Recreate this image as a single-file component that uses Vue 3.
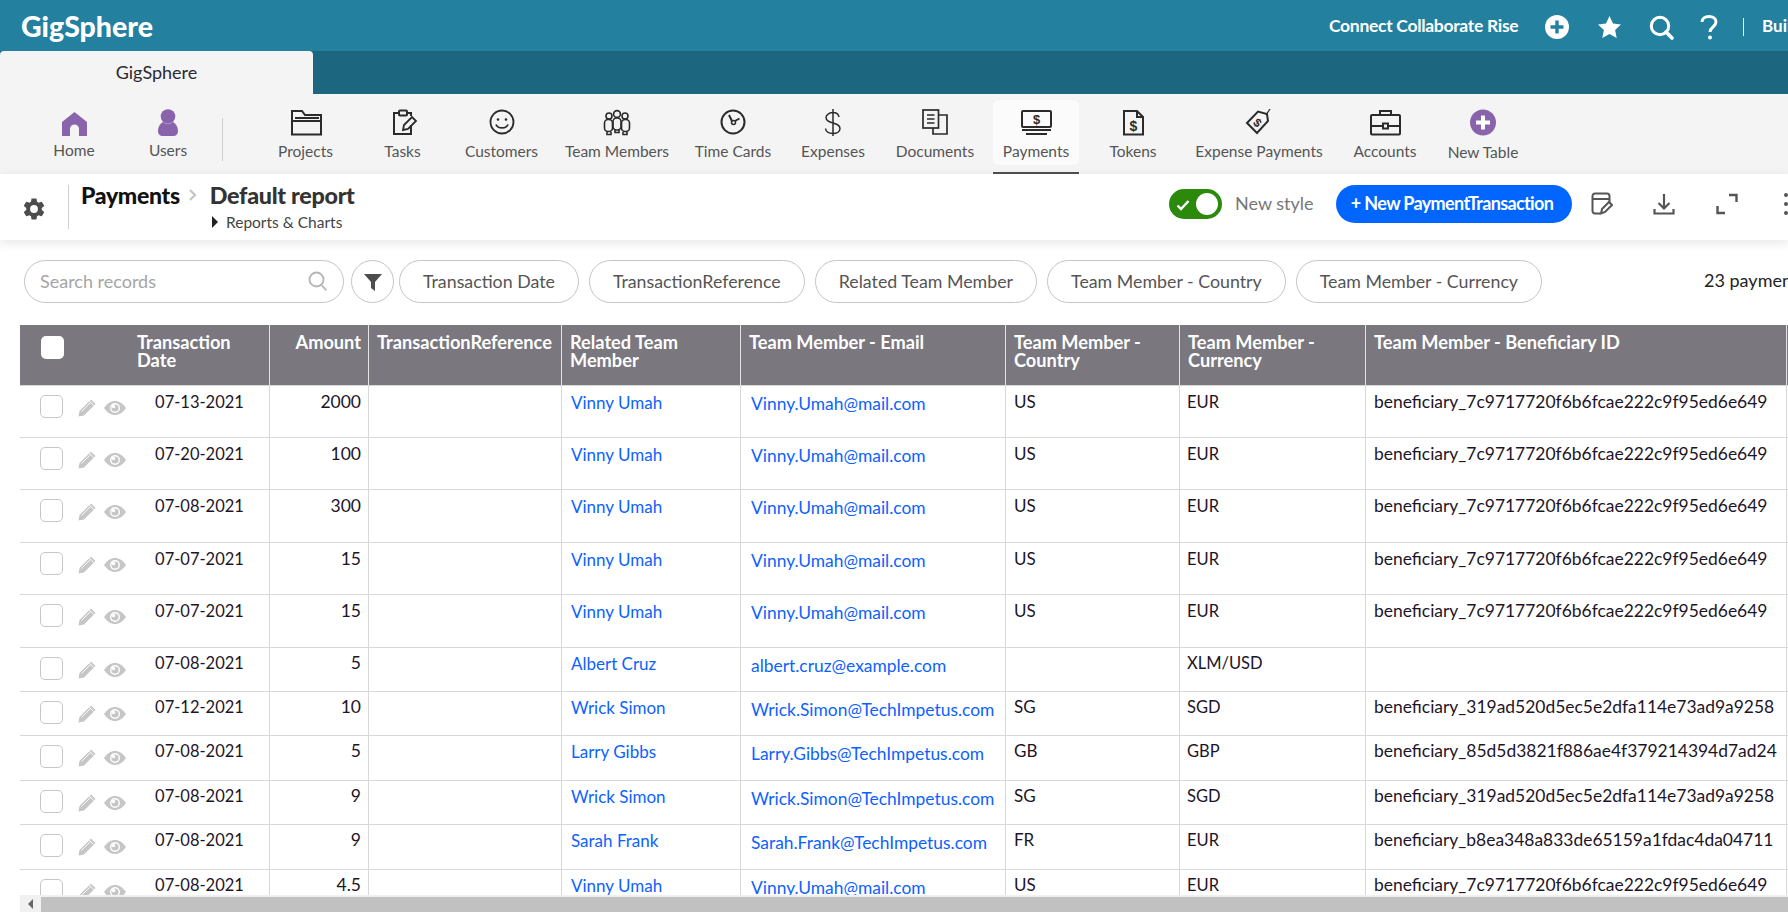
<script setup>
const navA = [
  { label: 'Home', w: 94, icon: 'home' },
  { label: 'Users', w: 94, icon: 'users' }
]
const navB = [
  { label: 'Projects', w: 97, icon: 'projects' },
  { label: 'Tasks', w: 97, icon: 'tasks' },
  { label: 'Customers', w: 101, icon: 'customers' },
  { label: 'Team Members', w: 130, icon: 'team' },
  { label: 'Time Cards', w: 102, icon: 'time' },
  { label: 'Expenses', w: 98, icon: 'dollar' },
  { label: 'Documents', w: 106, icon: 'docs' },
  { label: 'Payments', w: 86, icon: 'payments', active: true },
  { label: 'Tokens', w: 108, icon: 'tokens' },
  { label: 'Expense Payments', w: 144, icon: 'tag' },
  { label: 'Accounts', w: 108, icon: 'accounts' },
  { label: 'New Table', w: 88, icon: 'plus', low: true }
]
const pills = ['Transaction Date', 'TransactionReference', 'Related Team Member', 'Team Member - Country', 'Team Member - Currency']
const cols = [109, 141, 99, 193, 179, 265, 174, 186, 421, 120]
const vinny = ['Vinny Umah', 'Vinny.Umah@mail.com', 'US', 'EUR', 'beneficiary_7c9717720f6b6fcae222c9f95ed6e649']
const wrick = ['Wrick Simon', 'Wrick.Simon@TechImpetus.com', 'SG', 'SGD', 'beneficiary_319ad520d5ec5e2dfa114e73ad9a9258']
const mk = (date, amount, p, h) => ({ date, amount, name: p[0], email: p[1], country: p[2], currency: p[3], ben: p[4], h })
const rows = [
  mk('07-13-2021', '2000', vinny, 53),
  mk('07-20-2021', '100', vinny, 52),
  mk('07-08-2021', '300', vinny, 53),
  mk('07-07-2021', '15', vinny, 52),
  mk('07-07-2021', '15', vinny, 53),
  mk('07-08-2021', '5', ['Albert Cruz', 'albert.cruz@example.com', '', 'XLM/USD', ''], 44),
  mk('07-12-2021', '10', wrick, 44),
  mk('07-08-2021', '5', ['Larry Gibbs', 'Larry.Gibbs@TechImpetus.com', 'GB', 'GBP', 'beneficiary_85d5d3821f886ae4f379214394d7ad24'], 45),
  mk('07-08-2021', '9', wrick, 44),
  mk('07-08-2021', '9', ['Sarah Frank', 'Sarah.Frank@TechImpetus.com', 'FR', 'EUR', 'beneficiary_b8ea348a833de65159a1fdac4da04711'], 45),
  mk('07-08-2021', '4.5', vinny, 44)
]
</script>

<template>
  <div class="page">
    <header class="topbar">
      <div class="logo">GigSphere</div>
      <div class="tagline">Connect Collaborate Rise</div>
      <svg class="ti t-plus" width="24" height="24" viewBox="0 0 24 24"><circle cx="12" cy="12" r="12" fill="#fff"/><path d="M12 5.500v13M5.500 12h13" stroke="#23809f" stroke-width="3.400"/></svg>
      <svg class="ti t-star" width="25" height="24" viewBox="0 0 25 24"><path d="M12.500 1l3.500 7.400 8 1-5.900 5.500 1.600 8-7.200-4-7.200 4 1.600-8L1 9.400l8-1z" fill="#fff"/></svg>
      <svg class="ti t-search" width="25" height="25" viewBox="0 0 25 25" fill="none" stroke="#fff"><circle cx="11" cy="11" r="8.700" stroke-width="3"/><path d="M17 17l6 6" stroke-width="3.600" stroke-linecap="round"/></svg>
      <svg class="ti t-help" width="18" height="25" viewBox="0 0 18 25" fill="none" stroke="#fff"><path d="M2 7c0-3.500 3-5.500 7-5.500s7 2 7 5.500c0 5-6 5-6 10" stroke-width="3"/><circle cx="10" cy="22.500" r="2" fill="#fff" stroke="none"/></svg>
      <div class="tdiv"></div>
      <div class="build">Build</div>
    </header>

    <div class="tabbar"><div class="tab">GigSphere</div></div>

    <nav class="nav">
      <div v-for="n in navA" :key="n.label" class="nitem home-item" :style="{ width: n.w + 'px' }">
        <svg v-if="n.icon === 'home'" width="32" height="28" viewBox="0 0 32 28"><path d="M16.500 3L29 13v14h-8v-7a4.500 4.500 0 0 0-9 0v7H4V13z" fill="#8a63ad"/></svg>
        <svg v-else width="32" height="28" viewBox="0 0 32 28" fill="#8a63ad"><circle cx="16" cy="7.500" r="7.300"/><path d="M6 22c0-5 3-8 5-9 3 2.500 7 2.500 10 0 2 1 5 4 5 9 0 3-2 5-5 5H11c-3 0-5-2-5-5z"/></svg>
        <span>{{ n.label }}</span>
      </div>
      <div class="ndiv"></div>
      <div v-for="n in navB" :key="n.label" class="nitem" :class="{ active: n.active, low: n.low }" :style="{ width: n.w + 'px' }">
        <svg width="32" height="28" viewBox="0 0 32 28" fill="none" stroke="#2b2b2b" stroke-width="2">
          <template v-if="n.icon === 'projects'"><path d="M2 25.500V2h10l3 4h16v19.500zM2 12h29M5 9h24"/></template>
          <template v-else-if="n.icon === 'tasks'"><path d="M12 4H7v21h17v-9M20 4h4v3"/><rect x="12" y="1.500" width="8" height="5" rx="1"/><path d="M16 21l1-5 8-8 4 4-8 8z" stroke-width="1.800"/></template>
          <template v-else-if="n.icon === 'customers'"><circle cx="16" cy="13" r="11.500" stroke-width="1.800"/><circle cx="12" cy="10.500" r="1.300" fill="#2b2b2b" stroke="none"/><circle cx="20" cy="10.500" r="1.300" fill="#2b2b2b" stroke="none"/><path d="M10 15.500c2 4.500 10 4.500 12 0" stroke-width="1.800"/></template>
          <template v-else-if="n.icon === 'team'" ><g stroke-width="1.600"><circle cx="8" cy="7" r="3"/><circle cx="16" cy="5" r="3.400"/><circle cx="24" cy="7" r="3"/><rect x="3.500" y="10.500" width="8" height="12" rx="3.500"/><rect x="12" y="9" width="8" height="12" rx="3.500"/><rect x="20.500" y="10.500" width="8" height="12" rx="3.500"/><path d="M6 23v2.500h4V23M14 21v2.500h4V21M22 23v2.500h4V23"/></g></template>
          <template v-else-if="n.icon === 'time'"><circle cx="16" cy="13" r="11.500"/><path d="M12 6l3.200 6.500M18 12l4.500-2.500"/><circle cx="16.500" cy="13.500" r="2" stroke-width="1.500"/></template>
          <template v-else-if="n.icon === 'dollar'"><path d="M22 8c-.5-3-3-4.500-6-4.500S9 5.500 9 8.500c0 3.500 3.500 4.500 7 5.500s7 2 7 5.500c0 3-3 5-7 5s-7-2-7.500-5M16 0v27" stroke-width="1.500"/></template>
          <template v-else-if="n.icon === 'docs'"><g stroke-width="1.700"><rect x="4" y="1" width="15.500" height="18"/><path d="M8 6h7.500M8 10h7.500M8 14h7.500" stroke-width="1.400"/><path d="M19.500 6H28v19H14v-6"/></g></template>
          <template v-else-if="n.icon === 'payments'"><rect x="2" y="2" width="29" height="16" rx="1"/><text x="16.500" y="14.500" text-anchor="middle" font-family="Liberation Sans" font-weight="700" font-size="13" fill="#2b2b2b" stroke="none">$</text><path d="M2 21h29M6 25h21" stroke-width="2"/></template>
          <template v-else-if="n.icon === 'tokens'"><path d="M7 2h13l6 6v17.500H7zM20 2v6h6"/><text x="16.500" y="22" text-anchor="middle" font-family="Liberation Sans" font-weight="700" font-size="14" fill="#2b2b2b" stroke="none">$</text></template>
          <template v-else-if="n.icon === 'tag'"><path d="M4 14L15 2.500l9 2.500 1 7-11 12z"/><path d="M23 6l4-6" stroke-width="1.300"/><text x="15" y="18" text-anchor="middle" transform="rotate(40 15 13)" font-family="Liberation Sans" font-weight="700" font-size="12" fill="#2b2b2b" stroke="none">$</text></template>
          <template v-else-if="n.icon === 'accounts'"><rect x="2" y="6" width="29" height="19.500" rx="1"/><path d="M11 6V2h11v4M2 17h12M19 17h12"/><rect x="14" y="14.500" width="5" height="5"/></template>
          <template v-else-if="n.icon === 'plus'"><circle cx="16" cy="13.500" r="13" fill="#8a63ad" stroke="none"/><path d="M16 6.500v14M9 13.500h14" stroke="#fff" stroke-width="4"/></template>
        </svg>
        <span>{{ n.label }}</span>
      </div>
    </nav>

    <section class="toolbar">
      <svg class="gear" width="26" height="26" viewBox="0 0 24 24"><path fill="#4d4d4d" d="M19.140 12.940c.04-.3.06-.61.06-.94 0-.32-.02-.64-.07-.94l2.030-1.580a.49.49 0 0 0 .12-.61l-1.920-3.320a.488.488 0 0 0-.59-.22l-2.390.96c-.5-.38-1.030-.7-1.620-.94L14.400 2.810c-.04-.24-.24-.41-.48-.41h-3.840c-.24 0-.43.17-.47.41L9.250 5.350c-.59.24-1.130.57-1.620.94l-2.390-.96a.488.488 0 0 0-.59.22L2.740 8.870c-.12.21-.08.47.12.61l2.030 1.580c-.05.3-.09.63-.09.94s.02.64.07.94l-2.030 1.580a.49.49 0 0 0-.12.61l1.920 3.320c.12.22.37.29.59.22l2.390-.96c.5.38 1.030.7 1.620.94l.36 2.540c.05.24.24.41.48.41h3.840c.24 0 .44-.17.47-.41l.36-2.540c.59-.24 1.130-.56 1.620-.94l2.390.96c.22.08.47 0 .59-.22l1.920-3.320c.12-.22.07-.47-.12-.61zM12 15.600a3.600 3.600 0 1 1 0-7.200 3.600 3.600 0 0 1 0 7.200z"/></svg>
      <div class="vline"></div>
      <div class="crumbs">
        <div class="crumb-top"><b class="c1">Payments</b><svg class="chev" width="10" height="12" viewBox="0 0 10 12" fill="none" stroke="#c4c4c4" stroke-width="2.200"><path d="M2 1l5 5-5 5"/></svg><b class="c2">Default report</b></div>
        <div class="reports"><i class="tri"></i>Reports &amp; Charts</div>
      </div>
      <div class="toggle"><svg width="14" height="12" viewBox="0 0 14 12" fill="none" stroke="#fff" stroke-width="2.400"><path d="M1.500 6.500l3.500 3.500 7.500-8"/></svg><i class="knob"></i></div>
      <div class="newstyle">New style</div>
      <button class="newbtn">+ New PaymentTransaction</button>
      <svg class="a1" width="22" height="24" viewBox="0 0 22 24" fill="none" stroke="#555" stroke-width="2"><path d="M9 21.500H4a2.500 2.500 0 0 1-2.500-2.500V4A2.500 2.500 0 0 1 4 1.500h12A2.500 2.500 0 0 1 18.500 4v6M1.500 7h17"/><path d="M10 21.500l1-4.500 7-7 3 3-7 7z"/></svg>
      <svg class="a2" width="22" height="24" viewBox="0 0 22 24" fill="none" stroke="#555" stroke-width="2.200"><path d="M11 2v14M5.500 11l5.500 5.500 5.500-5.500M1.500 17v4.500h19V17"/></svg>
      <svg class="a3" width="22" height="22" viewBox="0 0 22 22" fill="none" stroke="#555" stroke-width="2.400"><path d="M13 2h7.500v7M9 20H1.500v-7"/></svg>
      <div class="dots"><i></i><i></i><i></i></div>
    </section>

    <section class="filters">
      <div class="search"><span>Search records</span><svg width="22" height="22" viewBox="0 0 22 22" fill="none" stroke="#b5b5b5" stroke-width="1.800"><circle cx="9.500" cy="9.500" r="7"/><path d="M14.500 15l5 5.500"/></svg></div>
      <div class="funnel"><svg width="18" height="18" viewBox="0 0 18 18"><path d="M0 1h18l-7 8v9l-4-3V9z" fill="#4d4d4d"/></svg></div>
      <div v-for="p in pills" :key="p" class="pill">{{ p }}</div>
      <div class="count">23 payments</div>
    </section>

    <div class="tablewrap">
      <table class="grid">
        <colgroup><col v-for="(c, i) in cols" :key="i" :style="{ width: c + 'px' }" /></colgroup>
        <thead>
          <tr>
            <th class="nob"><i class="headbox"></i></th>
            <th>Transaction Date</th>
            <th class="r">Amount</th>
            <th>TransactionReference</th>
            <th>Related Team Member</th>
            <th>Team Member - Email</th>
            <th>Team Member - Country</th>
            <th>Team Member - Currency</th>
            <th>Team Member - Beneficiary ID</th>
            <th></th>
          </tr>
        </thead>
        <tbody>
          <tr v-for="(r, i) in rows" :key="i" :class="{ tall: r.h > 50 }" :style="{ height: r.h + 'px' }">
            <td class="nob acts">
              <div class="actrow">
                <i class="box"></i>
                <svg width="18" height="18" viewBox="0 0 18 18"><path d="M13 0.500L17.500 5 6 16.500 0.500 17.500 1.500 12z" fill="#c6c6c6"/><path d="M3.500 12.500L13 3M11 1.800l5 5" stroke="#fff" stroke-width="0.900"/></svg>
                <svg class="eye" width="22" height="14" viewBox="0 0 22 14"><path d="M0 7c3-4.500 7-7 11-7s8 2.500 11 7c-3 4.500-7 7-11 7S3 11.500 0 7z" fill="#c6c6c6"/><circle cx="11" cy="7" r="5" fill="#fff"/><circle cx="11" cy="7" r="3.600" fill="#c6c6c6"/><circle cx="9.500" cy="5.500" r="1.800" fill="#fff"/></svg>
              </div>
            </td>
            <td class="date">{{ r.date }}</td>
            <td class="r amt">{{ r.amount }}</td>
            <td></td>
            <td class="lnk"><a>{{ r.name }}</a></td>
            <td class="lnk mail"><a>{{ r.email }}</a></td>
            <td>{{ r.country }}</td>
            <td class="cur">{{ r.currency }}</td>
            <td class="ben">{{ r.ben }}</td>
            <td></td>
          </tr>
        </tbody>
      </table>
    </div>
    <div class="hscroll"><div class="arrow"><i></i></div><div class="thumb"></div></div>
  </div>
</template>

<style scoped>
.page { width: 1788px; height: 912px; overflow: hidden; display: flex; flex-direction: column; background: #fff; font-family: Lato, "Noto Sans", sans-serif; color: #1d1527; }
.topbar { height: 51px; flex: none; background: #23809f; display: flex; align-items: center; color: #fff; white-space: nowrap; overflow: hidden; }
.logo { margin-left: 21px; width: 1308px; font-size: 28.500px; font-weight: 900; flex: none; }
.tagline { width: 216px; font-size: 17.500px; font-weight: 700; letter-spacing: -0.300px; flex: none; }
.ti { flex: none; margin-top: 2px; }
.t-star { margin-left: 28px; }
.t-search { margin-left: 27px; margin-top: 3px; }
.t-help { margin-left: 26px; margin-top: 4px; }
.tdiv { width: 1px; height: 18px; background: #fff; margin-left: 25px; margin-top: 3px; flex: none; }
.build { margin-left: 18px; font-size: 17px; font-weight: 700; flex: none; }
.tabbar { height: 43px; flex: none; background: #1c6680; }
.tab { width: 313px; height: 43px; box-sizing: border-box; padding-bottom: 2px; background: #f4f4f4; border-radius: 4px 4px 0 0; display: flex; align-items: center; justify-content: center; font-size: 18px; color: #2a2a32; }
.nav { height: 80px; flex: none; background: #f4f4f4; display: flex; padding-left: 27px; }
.nitem { flex: none; height: 80px; padding-top: 15px; box-sizing: border-box; display: flex; flex-direction: column; align-items: center; font-size: 15.500px; color: #555; position: relative; }
.nitem svg { display: block; flex: none; }
.nitem span { margin-top: 5px; line-height: 19px; white-space: nowrap; }
.home-item span { margin-top: 4px; }
.nitem.low span { margin-top: 6px; }
.nitem.active { margin-left: 5px; }
.nitem.active::before { content: ""; position: absolute; left: 0; right: 0; top: 6px; height: 65px; background: #fbfbfb; border-radius: 6px; }
.nitem.active::after { content: ""; position: absolute; left: 0; right: 0; bottom: 0; height: 2px; background: #4f4f4f; }
.nitem.active svg, .nitem.active span { position: relative; z-index: 1; }
.ndiv { width: 1px; height: 43px; margin: 24px 34px 0 7px; background: #cfcfcf; flex: none; }
.toolbar { height: 66px; flex: none; position: relative; z-index: 2; display: flex; background: #fff; box-shadow: 0 3px 10px rgba(0, 0, 0, .1); white-space: nowrap; }
.gear { margin: 22px 0 0 21px; flex: none; }
.vline { width: 1px; height: 44px; margin: 11px 0 0 21px; background: #cfcfcf; flex: none; }
.crumbs { margin-left: 12px; width: 1088px; flex: none; }
.crumb-top { display: flex; align-items: center; height: 28px; margin-top: 7px; font-size: 23px; }
.c1 { color: #111; font-weight: 900; letter-spacing: -0.300px; }
.chev { margin: 0 12px 0 8px; }
.c2 { color: #333; font-size: 23.300px; font-weight: 900; letter-spacing: -0.300px; }
.reports { margin: 4px 0 0 131px; font-size: 15.500px; color: #444; line-height: 18px; }
.tri { display: inline-block; width: 0; height: 0; border: 6px solid transparent; border-left: 6px solid #222; border-right: 0; margin-right: 8px; }
.toggle { width: 53px; height: 30px; margin-top: 15px; border-radius: 15px; background: #2b8a0b; position: relative; flex: none; }
.toggle svg { position: absolute; left: 7px; top: 10px; }
.knob { position: absolute; right: 4px; top: 4px; width: 22px; height: 22px; border-radius: 50%; background: #fff; }
.newstyle { width: 114px; box-sizing: border-box; padding-left: 13px; font-size: 18px; color: #777; line-height: 58px; flex: none; }
.newbtn { width: 236px; height: 38px; margin-top: 11px; flex: none; border: 0; border-radius: 19px; background: #0066ff; color: #fff; font: 700 18px Lato, sans-serif; letter-spacing: -0.640px; padding: 0 4px 2px 0; }
.a1 { margin: 18px 0 0 19px; flex: none; }
.a2 { margin: 18px 0 0 40px; flex: none; }
.a3 { margin: 19px 0 0 41px; flex: none; }
.dots { margin: 19px 0 0 46px; flex: none; display: flex; flex-direction: column; gap: 5px; }
.dots i { width: 4px; height: 4px; background: #555; border-radius: 50%; display: block; }
.filters { height: 85px; flex: none; display: flex; padding: 20px 0 0 24px; box-sizing: border-box; white-space: nowrap; }
.search { width: 320px; height: 43px; box-sizing: border-box; border: 1px solid #c4c4c4; border-radius: 22px; display: flex; align-items: center; justify-content: space-between; padding: 0 14px 2px 15px; font-size: 18px; color: #a5a5a5; flex: none; }
.funnel { width: 43px; height: 43px; margin-left: 7px; box-sizing: border-box; border: 1px solid #c4c4c4; border-radius: 50%; display: flex; align-items: center; justify-content: center; flex: none; }
.pill { height: 43px; box-sizing: border-box; border: 1px solid #c4c4c4; border-radius: 22px; padding: 0 23px 2px; margin-left: 10px; display: flex; align-items: center; font-size: 17.800px; color: #555; flex: none; }
.funnel + .pill { margin-left: 5px; }
.count { margin-left: 162px; font-size: 18px; color: #222; line-height: 41px; flex: none; }
.tablewrap { height: 570px; flex: none; margin-left: 20px; overflow: hidden; }
.grid { table-layout: fixed; width: 1887px; border-collapse: separate; border-spacing: 0; font-size: 17px; }
.grid th { height: 60px; padding: 8px 7px 0 8px; box-sizing: border-box; background: #7a777f; color: #fff; font-size: 18.200px; font-weight: 700; line-height: 18px; text-align: left; vertical-align: top; border-right: 1px solid #e4e4e4; border-bottom: 0; }
.grid td { padding: 5px 7px 0 8px; box-sizing: border-box; vertical-align: top; line-height: 20px; white-space: nowrap; border-right: 1px solid #d8d8d8; border-bottom: 1px solid #d8d8d8; }
.grid tr.tall td { padding-top: 6px; }
.grid tbody tr:first-child td { border-top: 1px solid #d8d8d8; }
.grid .nob { border-right: 0; }
.grid .r { text-align: right; }
.grid .amt { font-size: 17.500px; }
.grid .date { text-align: center; font-size: 16.500px; }
.grid .cur { font-size: 16.500px; padding-left: 7px; }
.grid .ben { font-size: 17.450px; }
.grid .lnk { padding-top: 6px; padding-left: 9px; }
.grid tr.tall .lnk { padding-top: 7px; }
.grid .mail { padding-left: 10px; font-size: 17.400px; }
.grid tr .mail, .grid tr.tall .mail { padding-top: 8px; }
.grid a { color: #0d62ff; }
.headbox { display: block; width: 23px; height: 23px; border-radius: 5px; background: #fff; margin: 3px 0 0 13px; }
.grid tr.tall .acts, .grid .acts { padding: 0; }
.actrow { display: flex; align-items: flex-start; padding: 9px 0 0 20px; }
.box { width: 23px; height: 23px; box-sizing: border-box; border: 1px solid #c6c6c6; border-radius: 5px; flex: none; }
.actrow svg { flex: none; margin: 4px 0 0 15px; }
.actrow .eye { margin: 6px 0 0 8px; }
.hscroll { height: 17px; flex: none; margin-left: 20px; display: flex; background: #f1f1f1; }
.arrow { width: 21px; display: flex; align-items: center; justify-content: center; flex: none; }
.arrow i { width: 0; height: 0; border: 5px solid transparent; border-right: 5px solid #666; border-left: 0; }
.thumb { flex: 1; margin-top: 2px; background: #c1c1c1; }
</style>
